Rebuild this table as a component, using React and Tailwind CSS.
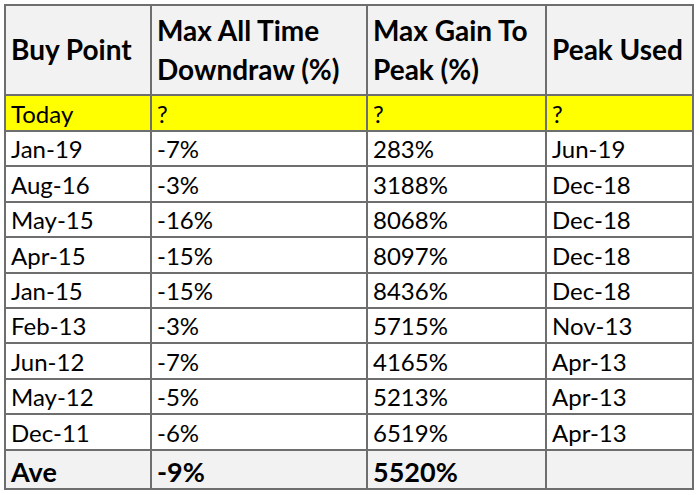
const rows = [
  ["Jan-19", "-7%", "283%", "Jun-19"],
  ["Aug-16", "-3%", "3188%", "Dec-18"],
  ["May-15", "-16%", "8068%", "Dec-18"],
  ["Apr-15", "-15%", "8097%", "Dec-18"],
  ["Jan-15", "-15%", "8436%", "Dec-18"],
  ["Feb-13", "-3%", "5715%", "Nov-13"],
  ["Jun-12", "-7%", "4165%", "Apr-13"],
  ["May-12", "-5%", "5213%", "Apr-13"],
  ["Dec-11", "-6%", "6519%", "Apr-13"],
];

const cell = "border-2 border-[#6e6e6e] pl-[5px] pr-1 pb-[1px] align-bottom";

const App = () => {
  return (
    <div
      className="w-[700px] h-[495px] bg-white pt-[4px] pl-[4px] text-black"
      style={{ fontFamily: "Lato, 'Open Sans', sans-serif" }}
    >
      <table className="border-collapse table-fixed w-[688px]">
        <colgroup>
          <col className="w-[146px]" />
          <col className="w-[216px]" />
          <col className="w-[179px]" />
          <col className="w-[147px]" />
        </colgroup>
        <thead>
          <tr className="h-[90px] bg-[#f2f2f2] text-[28px] font-bold leading-[39px]">
            <th className={`${cell} text-left !align-middle`}>Buy Point</th>
            <th className={`${cell} text-left !align-middle`}>
              Max All Time
              <br />
              Downdraw (%)
            </th>
            <th className={`${cell} text-left !align-middle`}>
              Max Gain To
              <br />
              Peak (%)
            </th>
            <th className={`${cell} text-left !align-middle`}>Peak Used</th>
          </tr>
        </thead>
        <tbody className="text-[24px] leading-[30px]">
          <tr className="h-[36px] bg-[#ffff00]">
            <td className={cell}>Today</td>
            <td className={cell}>?</td>
            <td className={cell}>?</td>
            <td className={cell}>?</td>
          </tr>
          {rows.map((r) => (
            <tr key={r[0]} className="h-[35.4px]">
              {r.map((v, i) => (
                <td key={i} className={cell}>
                  {v}
                </td>
              ))}
            </tr>
          ))}
          <tr className="h-[39px] bg-[#f2f2f2] font-bold text-[27px]">
            <td className={cell}>Ave</td>
            <td className={cell}>-9%</td>
            <td className={cell}>5520%</td>
            <td className={cell}></td>
          </tr>
        </tbody>
      </table>
    </div>
  );
};

export default App;
